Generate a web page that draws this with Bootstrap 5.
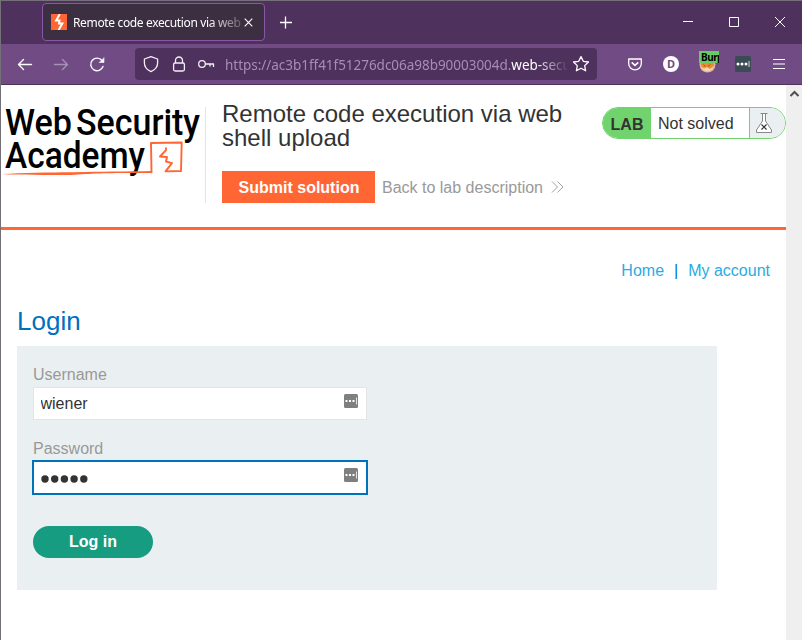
<!DOCTYPE html>
<html lang="en">
<head>
<meta charset="utf-8">
<meta name="viewport" content="width=device-width, initial-scale=1">
<title>Remote code execution via web shell upload</title>
<link href="https://cdn.jsdelivr.net/npm/bootstrap@5.3.0/dist/css/bootstrap.min.css" rel="stylesheet">
<style>
body{font-family:"Liberation Sans",Arial,sans-serif;font-size:16px;line-height:16px;color:#333332;height:640px;overflow:hidden}
svg{display:block;flex:none}
.window{height:640px;border-left:1px solid #737078;border-top:1px solid #737078}
.chrome{font-family:"Noto Sans","Open Sans",sans-serif;color:#fff}
.titlebar{height:43px;background:#4f315d;padding:2px 0 0 41px}
.tab-item{width:223px;height:38px;background:#3c2f41;border:1px solid #8a56a6;border-radius:4px;padding-left:8px}
.tab-title{font-size:12px;line-height:18px;letter-spacing:-.35px;width:168px;margin:2px 0 0 6px;-webkit-mask-image:linear-gradient(90deg,#000 135px,transparent 178px);mask-image:linear-gradient(90deg,#000 135px,transparent 178px)}
.tab-close{margin-left:3px}
.tab-new{margin-left:14px}
.toolbar{height:41px;background:#704b84;border-bottom:1px solid #4f315d;padding-left:16px}
.urlbar{width:463px;height:32px;background:#4f315d;border-radius:4px;margin-left:28px;padding-left:7px}
.url{width:342px;font-size:13.5px;line-height:20px;letter-spacing:-.03px;color:#a78db5;margin:2px 0 0 9px;-webkit-mask-image:linear-gradient(90deg,#000 310px,transparent 344px);mask-image:linear-gradient(90deg,#000 310px,transparent 344px)}
.star{margin-left:5px}
.burp{width:20px;height:22px;margin-left:19px}
.burp-tag{left:1px;top:-2px;width:20px;height:12px;background:#66cc66;color:#000;font:bold 10px/12px "Noto Sans",sans-serif;letter-spacing:-.5px;padding-left:2px}
.page-view{height:555px}
.scroll{width:16px;background:#efefef;padding:5px 0 0 3px}
.lab-header{height:145px;border-bottom:3px solid #f63;padding-top:22px}
.logo-col{width:205px;height:96px;border-right:1px solid #e4e4e4}
.title-col{width:364px;margin-left:16px}
.lab-title{font-size:24px;line-height:24px;margin:-5px 0 21px;font-weight:400}
.submit{width:153px;height:32px;background:#f63;color:#fff;border-radius:0;font-weight:700;line-height:16px;padding:2px 0 0 1px;border:0}
.back{color:#999;margin-left:7px;padding-top:2px}
.status{width:184px;height:32px;border:1px solid #70d36d;border-radius:16px;margin-left:16px}
.status-tag{width:48px;background:#70d36d;font-weight:700;padding-top:3px}
.status-text{width:99px;border-right:1px solid #70d36d;padding:2px 0 0 7px}
.status-flask{background:#eaf0f2;padding-left:5px}
.menu-row{padding:33px 16px 0 0;color:#0071bc;gap:10px}
.menu-row a{color:#29abe2}
.login-title{font-size:26px;line-height:30px;color:#0071bc;margin:27px 0 10px 16px;font-weight:400}
.login-box{width:700px;height:244px;background:#eaf0f2;margin-left:16px;padding:20px 16px 0}
.login-box label{color:#999;line-height:18px;margin-bottom:3px}
.field{width:334px;height:33px;background:#fff;border:1px solid #e4e4e4;padding:0 8px 0 6.5px}
.field input{border:0;padding:0;width:280px;outline:0;color:#333332;background:none}
.field-icon{margin-bottom:6px}
.field-focus{border-color:#0071bc;box-shadow:0 0 0 1px #0071bc}
.dots{margin:3px 0 0 .5px}
.login-btn{width:120px;height:32px;background:#169c80;color:#fff;font-weight:700;line-height:16px;margin-top:32px;padding:0 0 1px;border:0}
</style>
<script src="https://cdn.jsdelivr.net/npm/bootstrap@5.3.0/dist/js/bootstrap.bundle.min.js"></script>
</head>
<body class="bg-white">
<div class="window">
  <div class="chrome">
    <div class="titlebar d-flex">
      <div class="tab-item d-flex align-items-center">
        <svg width="16" height="16" viewBox="0 0 16 16"><rect width="16" height="16" fill="#f63"/><path d="M8.800 0 5.200 6.400h3.300L8 9.600h3.300L7.600 16" fill="none" stroke="#fff" stroke-width="2"/></svg>
        <span class="tab-title text-nowrap overflow-hidden">Remote code execution via web</span>
        <svg class="tab-close" width="9" height="9" viewBox="0 0 9 9"><path d="m.7.700 7.600 7.600M8.300.700.700 8.300" stroke="#fff" stroke-width="1.100"/></svg>
      </div>
      <svg class="tab-new" width="14" height="38" viewBox="0 0 14 38"><path d="M1 19.500h12M6.500 13.500v12" stroke="#fff" stroke-width="1.300"/></svg>
      <svg class="ms-auto" width="120" height="38" viewBox="0 0 120 38" fill="none" stroke="#fff"><path d="M1 18.500h10M47.500 14.500h9v9h-9zM93 14l10 10M103 14 93 24"/></svg>
    </div>
    <div class="toolbar d-flex align-items-center">
      <svg width="90" height="20" viewBox="0 0 90 20" fill="none" stroke="#fbfbfe" stroke-width="1.400" stroke-linecap="round" stroke-linejoin="round"><path d="M14.500 10.500H1.500M6.500 5.500 1.500 10.500l5 5"/><path d="M37.500 10.500h13M45.500 5.500l5 5-5 5" opacity=".4"/><path d="M85 6.500a6.300 6.300 0 1 0 1 6"/><path d="M82.500 8.500h4.500V4z" fill="#fbfbfe" stroke-width=".6"/></svg>
      <div class="urlbar d-flex align-items-center">
        <svg width="74" height="20" viewBox="0 0 74 20" fill="none" stroke="#f4eff7" stroke-width="1.300" stroke-linejoin="round"><path d="M9 2.600 15.600 5v4c0 4-3 7-6.600 8.700C5.400 16 2.400 13 2.400 9V5z"/><rect x="31.600" y="9" width="10.800" height="8" rx="1.500"/><path d="M33.500 9V6.500a3.500 3.500 0 0 1 7 0V9"/><circle cx="60" cy="10" r="3.300"/><path d="M63.300 10h8.200v3M68 10v2.500"/></svg>
        <span class="url text-nowrap overflow-hidden">https://ac3b1ff41f51276dc06a98b90003004d.<span class="text-white">web-security</span></span>
        <svg class="star" width="18" height="18" viewBox="0 0 18 18" fill="none" stroke="#fff" stroke-width="1.300" stroke-linejoin="round"><path d="m9 1.600 2.300 4.700 5.200.7-3.800 3.600.9 5.200L9 13.300l-4.600 2.500.9-5.200L1.500 7l5.200-.7z"/></svg>
      </div>
      <svg width="82" height="22" viewBox="0 0 82 22"><path d="M31.700 6h12.600v4.500a6.300 6.300 0 0 1-12.600 0z" fill="none" stroke="#fff" stroke-width="1.300" stroke-linejoin="round"/><path d="m34.700 9.300 3.300 3.100 3.300-3.100" fill="none" stroke="#fff" stroke-width="1.600"/><circle cx="74" cy="11" r="8" fill="#fff"/><text x="74" y="15" text-anchor="middle" font-family="Noto Sans,sans-serif" font-size="11" font-weight="700" fill="#704b84">D</text></svg>
      <div class="burp position-relative">
        <svg width="20" height="22" viewBox="0 0 20 22"><circle cx="9.500" cy="11.500" r="8" fill="#d8b79f"/><circle cx="9.500" cy="11.500" r="6.500" fill="#ee8b31"/><path d="M3 13.500c2 6 10 7 13-.5l-4 3-3-2-3 1.500z" fill="#f6d8b2"/><path d="m12.500 11.500-3 2M5.500 11.500l2 2" stroke="#965b36"/></svg>
        <div class="burp-tag position-absolute overflow-hidden">Burp</div>
      </div>
      <svg width="84" height="18" viewBox="0 0 84 18"><rect x="17" y="1" width="16" height="16" rx="1.500" fill="#3c4a55"/><circle cx="20" cy="9" r="1.500" fill="#fff"/><circle cx="24" cy="9" r="1.500" fill="#fff"/><circle cx="28" cy="9" r="1.500" fill="#fff"/><path d="M31 6v6" stroke="#fff" stroke-width=".8"/><path d="M55 4.500h12M55 9h12M55 13.500h12" stroke="#fff" stroke-width="1.200"/></svg>
    </div>
  </div>
  <div class="page-view d-flex">
    <main class="flex-grow-1">
      <header class="lab-header d-flex align-items-start">
        <div class="logo-col">
          <svg width="204" height="72" viewBox="1 107 204 72"><g font-family="Roboto,sans-serif" font-size="37" font-weight="500" fill="#000"><text x="5" y="135" textLength="67" lengthAdjust="spacingAndGlyphs">Web</text><text x="76" y="135" textLength="124" lengthAdjust="spacingAndGlyphs">Security</text><text x="5" y="168" textLength="140" lengthAdjust="spacingAndGlyphs">Academy</text></g><g fill="none" stroke="#f63" stroke-linejoin="round" stroke-linecap="round"><path d="M151.500 172.300 151 143l30.700-.5-.7 28.500-15.500.4 6.500-8.200-7-1.200.7-6.600-5.700.1 6-7.500v-1" stroke="none"/><path d="M151.500 172.300 151 143l30.700-.5-.7 28.500-15.500.4 6.500-8.300-6-1.600 1-4.500-7-.500 6-6.300v-2" stroke-width="1.900"/></g><path d="M2 174c40-2 100-2 150-3v2c-45-.5-60 .6-85 2-22-.2-45 .2-65-1z" fill="#f63"/></svg>
        </div>
        <div class="title-col">
          <h2 class="lab-title">Remote code execution via web shell upload</h2>
          <div class="d-flex align-items-center">
            <button class="btn submit">Submit solution</button>
            <a class="back text-decoration-none" href="#">Back to lab description</a>
            <svg class="ms-2" width="14" height="14" viewBox="0 0 14 14" fill="none" stroke="#999" stroke-width=".9"><path d="m1 1.500 5.500 5.500L1 12.500M6.500 1.500 12 7l-5.500 5.500"/></svg>
          </div>
        </div>
        <div class="status d-flex overflow-hidden">
          <div class="status-tag d-flex align-items-center justify-content-center">LAB</div>
          <div class="status-text d-flex align-items-center">Not solved</div>
          <div class="status-flask flex-grow-1 d-flex align-items-center">
            <svg width="18" height="22" viewBox="0 0 18 22" fill="none" stroke="#888"><path d="M5.500 1.500h7M7.500 2v7L1.500 18v2.500h15V18l-6-9V2" fill="#fff"/><path d="m6.500 12.500 5 5M11.500 12.500l-5 5" stroke="#333" stroke-width="1.200"/></svg>
          </div>
        </div>
      </header>
      <nav class="menu-row d-flex justify-content-end">
        <a class="text-decoration-none" href="#">Home</a><span>|</span><a class="text-decoration-none" href="#">My account</a>
      </nav>
      <h1 class="login-title">Login</h1>
      <form class="login-box">
        <label class="d-block" for="user">Username</label>
        <div class="field d-flex align-items-center justify-content-between">
          <input id="user" type="text" value="wiener">
          <svg class="field-icon" width="14" height="14" viewBox="0 0 14 14"><rect width="14" height="14" rx="1.500" fill="#7f7f7f"/><path d="M1.500 6h2v2h-2zM5 6h2v2H5zM8.500 6h2v2h-2zM12 3.500h.8v7H12z" fill="#fff"/></svg>
        </div>
        <label class="d-block mt-3 pt-1" for="pass">Password</label>
        <div class="field field-focus d-flex align-items-center justify-content-between">
          <svg class="dots" width="60" height="10" viewBox="0 0 60 10" fill="#333332"><circle cx="4" cy="5" r="3.700"/><circle cx="13.700" cy="5" r="3.700"/><circle cx="23.400" cy="5" r="3.700"/><circle cx="33.100" cy="5" r="3.700"/><circle cx="42.800" cy="5" r="3.700"/></svg>
          <svg class="field-icon" width="14" height="14" viewBox="0 0 14 14"><rect width="14" height="14" rx="1.500" fill="#7f7f7f"/><path d="M1.500 6h2v2h-2zM5 6h2v2H5zM8.500 6h2v2h-2zM12 3.500h.8v7H12z" fill="#fff"/></svg>
        </div>
        <button class="btn rounded-pill login-btn" type="button">Log in</button>
      </form>
    </main>
    <div class="scroll"><svg width="11" height="8" viewBox="0 0 11 8"><path d="M1.500 6 5.500 2l4 4" fill="none" stroke="#505050" stroke-width="2"/></svg></div>
  </div>
</div>
</body>
</html>
